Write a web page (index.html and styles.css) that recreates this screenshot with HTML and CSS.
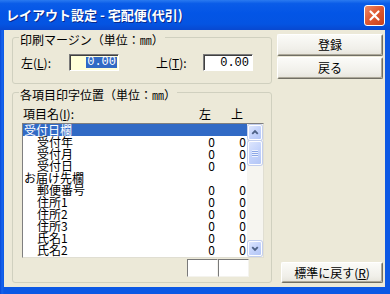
FILE: index.html
```html
<!DOCTYPE html>
<html lang="ja">
<head>
    <meta charset="UTF-8">
    <title>レイアウト設定 - 宅配便(代引)</title>
    <link rel="stylesheet" href="styles.css">
</head>
<body>
    <div class="window">
        <div class="titlebar">
            <span class="title">レイアウト設定 - 宅配便(代引)</span>
            <span class="close">
                <svg width="19" height="19" viewBox="0 0 19 19">
                    <path d="M5.5 5.5 L13.5 13.5 M13.5 5.5 L5.5 13.5" stroke="#fff" stroke-width="2.2" stroke-linecap="round"/>
                </svg>
            </span>
        </div>
        <div class="frame">
            <div class="client">
                <div class="left">
                    <fieldset class="group margin-group">
                        <legend>印刷マージン（単位：㎜）</legend>
                        <div class="margin-row">
                            <span class="lbl">左(<u>L</u>):</span>
                            <span class="edit edit-focus"><span class="sel">0.00</span></span>
                            <span class="lbl lbl-top">上(<u>T</u>):</span>
                            <span class="edit">0.00</span>
                        </div>
                    </fieldset>

                    <fieldset class="group pos-group">
                        <legend>各項目印字位置（単位：㎜）</legend>
                        <div class="pos-body">
                            <div class="list-head">
                                <span class="head-name">項目名(<u>I</u>):</span>
                                <span class="head-col">左</span>
                                <span class="head-col">上</span>
                            </div>
                            <div class="listbox">
                                <div class="rows">
                                    <div class="row selected"><span class="name">受付日欄</span></div>
                                    <div class="row"><span class="name sub">受付年</span><span class="num">0</span><span class="num">0</span></div>
                                    <div class="row"><span class="name sub">受付月</span><span class="num">0</span><span class="num">0</span></div>
                                    <div class="row"><span class="name sub">受付日</span><span class="num">0</span><span class="num">0</span></div>
                                    <div class="row"><span class="name">お届け先欄</span></div>
                                    <div class="row"><span class="name sub">郵便番号</span><span class="num">0</span><span class="num">0</span></div>
                                    <div class="row"><span class="name sub">住所1</span><span class="num">0</span><span class="num">0</span></div>
                                    <div class="row"><span class="name sub">住所2</span><span class="num">0</span><span class="num">0</span></div>
                                    <div class="row"><span class="name sub">住所3</span><span class="num">0</span><span class="num">0</span></div>
                                    <div class="row"><span class="name sub">氏名1</span><span class="num">0</span><span class="num">0</span></div>
                                    <div class="row"><span class="name sub">氏名2</span><span class="num">0</span><span class="num">0</span></div>
                                </div>
                                <div class="vscroll">
                                    <span class="sb-btn">
                                        <svg width="13" height="13" viewBox="0 0 13 13"><path d="M3.5 8 L6.5 5 L9.5 8" fill="none" stroke="#4d6185" stroke-width="2"/></svg>
                                    </span>
                                    <span class="sb-thumb">
                                        <svg width="8" height="8" viewBox="0 0 8 8">
                                            <path d="M1 1.5 H7 M1 3.5 H7 M1 5.5 H7 M1 7.5 H7" stroke="#eef2fd" stroke-width="1"/>
                                            <path d="M1 2.5 H7 M1 4.5 H7 M1 6.5 H7" stroke="#8ca7e6" stroke-width="1"/>
                                        </svg>
                                    </span>
                                    <span class="sb-track"></span>
                                    <span class="sb-btn">
                                        <svg width="13" height="13" viewBox="0 0 13 13"><path d="M3.5 5 L6.5 8 L9.5 5" fill="none" stroke="#4d6185" stroke-width="2"/></svg>
                                    </span>
                                </div>
                            </div>
                            <div class="edit-row">
                                <span class="cell"></span>
                                <span class="cell"></span>
                            </div>
                        </div>
                    </fieldset>
                </div>

                <div class="right">
                    <button class="btn">登録</button>
                    <button class="btn">戻る</button>
                    <button class="btn btn-reset">標準に戻す(<u>R</u>)</button>
                </div>
            </div>
        </div>
    </div>
</body>
</html>
```

FILE: styles.css
```css
* {
    box-sizing: border-box;
}
body {
    margin: 0;
    font-family: "Noto Sans CJK JP", sans-serif;
    font-size: 12px;
    line-height: 12px;
    color: #000;
}
.window {
    width: 390px;
    height: 294px;
    display: flex;
    flex-direction: column;
    background: #0b58e4;
}
.titlebar {
    height: 30px;
    display: flex;
    align-items: center;
    padding: 0 5px 0 6px;
    background: linear-gradient(#2a7af0 0%, #0a5ce8 12%, #0355e6 45%, #0454e2 80%, #0848d0 100%);
}
.title {
    flex: 1;
    color: #fff;
    font-weight: bold;
    font-size: 13px;
    line-height: 14px;
    text-shadow: 1px 1px #0a2a8c;
}
.close {
    width: 21px;
    height: 21px;
    display: flex;
    align-items: center;
    justify-content: center;
    border: 1px solid #fff;
    border-radius: 3px;
    background: linear-gradient(135deg, #ec8a68 0%, #e05a33 45%, #c8401c 100%);
}
.frame {
    flex: 1;
    display: flex;
    padding: 0 5px 7px 4px;
    background: linear-gradient(90deg, #0848d6, #1664ee 2px, #0b58e4 4px);
}
.client {
    flex: 1;
    display: flex;
    gap: 5px;
    padding: 0 2px 0 8px;
    background-color: #ece9d8;
}
.left {
    width: 260px;
    display: flex;
    flex-direction: column;
}
.group {
    margin: 0;
    padding: 0;
    min-width: 0;
    border: 1px solid #d0d0bf;
    border-radius: 3px;
}
.group legend {
    margin-left: 6px;
    padding: 0 1px;
    line-height: 12px;
    position: relative;
    top: 3px;
}
.margin-group {
    margin-top: 1px;
}
.margin-row {
    display: flex;
    align-items: center;
    padding: 11px 0 12px 8px;
}
.lbl {
    width: 48px;
    white-space: nowrap;
}
.lbl-top {
    width: 47px;
    margin-left: 37px;
}
.edit {
    width: 50px;
    height: 17px;
    display: flex;
    align-items: center;
    justify-content: flex-end;
    padding-right: 3px;
    font-family: "Liberation Mono", monospace;
    font-size: 12px;
    background: #fff;
    border-top: 1px solid #7a7a7a;
    border-left: 1px solid #7a7a7a;
    border-right: 1px solid #fff;
    border-bottom: 1px solid #fff;
    box-shadow: inset 1px 1px #404040;
}
.edit-focus {
    background: #ffffd8;
    padding-right: 1px;
}
.sel {
    background: #316ac5;
    color: #fff;
    line-height: 11px;
    padding: 0 1px;
}
.pos-group {
    margin-top: 2px;
}
.pos-body {
    padding: 10px 7px 5px 9px;
}
.list-head {
    display: flex;
    height: 12px;
    padding-left: 1px;
}
.head-name {
    flex: 1;
}
.head-col {
    width: 32px;
}
.head-col + .head-col {
    width: 33px;
}
.listbox {
    margin-top: 3px;
    height: 135px;
    display: flex;
    background: #fff;
    border: 1px solid #7f7f7f;
    border-right-color: #e0ded2;
    border-bottom-color: #e0ded2;
}
.rows {
    flex: 1;
    overflow: hidden;
}
.row {
    display: flex;
    height: 12px;
    line-height: 12px;
    white-space: nowrap;
    padding-left: 1px;
}
.row.selected {
    background: #316ac5;
    color: #fff;
}
.name {
    flex: 1;
}
.name.sub {
    padding-left: 13px;
}
.num {
    width: 32px;
    text-align: right;
}
.num + .num {
    padding-right: 1px;
}
.vscroll {
    width: 16px;
    display: flex;
    flex-direction: column;
    padding: 1px 1px 1px 1px;
    background: #f6f5f0;
}
.sb-btn,
.sb-thumb {
    height: 15px;
    display: flex;
    align-items: center;
    justify-content: center;
    border: 1px solid #fdfdff;
    border-radius: 2px;
    background: linear-gradient(135deg, #dde6fd 0%, #c4d3fb 50%, #b3c6f6 100%);
    box-shadow: 0 0 0 1px #c3cfee;
}
.sb-thumb {
    height: 24px;
    margin-top: 1px;
}
.sb-track {
    flex: 1;
}
.edit-row {
    display: flex;
    justify-content: flex-end;
    padding-right: 15px;
    margin-top: 1px;
}
.cell {
    width: 31px;
    height: 18px;
    background: #fff;
    border-top: 1px solid #7a7a7a;
    border-left: 1px solid #7a7a7a;
    border-right: 1px solid #f4f3ee;
    border-bottom: 1px solid #f4f3ee;
}
.right {
    width: 106px;
    display: flex;
    flex-direction: column;
    gap: 1px;
    padding: 4px 0 4px;
}
.btn {
    height: 22px;
    padding: 0;
    font-family: "Noto Sans CJK JP", sans-serif;
    font-size: 12px;
    line-height: 12px;
    color: #000;
    background: linear-gradient(#fbfbf8, #f0efe9 70%, #e6e4db);
    border: 1px solid;
    border-color: #fff #716f64 #716f64 #fff;
    box-shadow: inset -1px -1px #aca899;
    border-radius: 2px;
}
.btn-reset {
    margin-top: auto;
    width: 102px;
    height: 21px;
    align-self: flex-end;
}
```
